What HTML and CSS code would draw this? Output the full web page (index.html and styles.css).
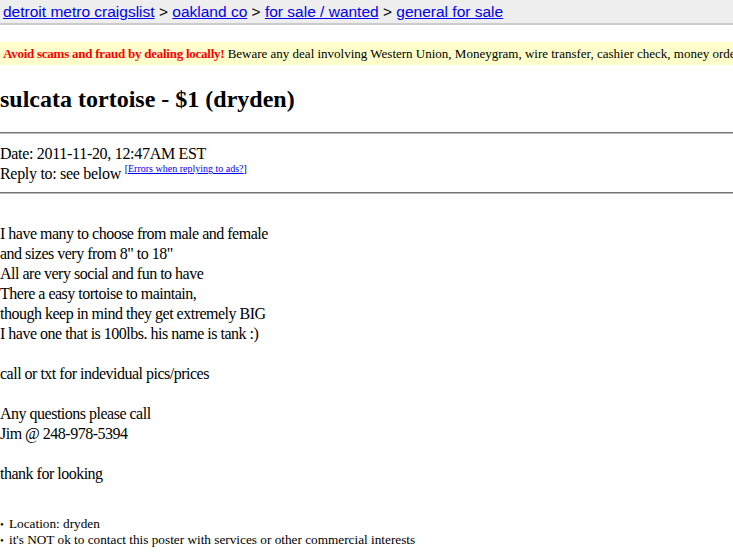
FILE: index.html
```
<!DOCTYPE html>
<html>
<head>
<meta charset="utf-8">
<title>sulcata tortoise - $1 (dryden)</title>
<link rel="stylesheet" href="styles.css">
</head>
<body>
<div class="bchead">
  <a href="#">detroit metro craigslist</a> &gt; <a href="#">oakland co</a> &gt; <a href="#">for sale / wanted</a> &gt; <a href="#">general for sale</a>
</div>

<div class="warning"><span class="warn-lead">Avoid scams and fraud by dealing locally!</span> Beware any deal involving Western Union, Moneygram, wire transfer, cashier check, money order</div>

<h2 class="posting-title">sulcata tortoise - $1 (dryden)</h2>
<hr class="rule">
<div class="meta">
  <div>Date: 2011-11-20, 12:47AM EST</div>
  <div>Reply to: see below <sup class="errors">[<a href="#">Errors when replying to ads?</a>]</sup></div>
</div>
<hr class="rule">

<div class="userbody">
I have many to choose from male and female<br>
and sizes very from 8" to 18"<br>
All are very social and fun to have<br>
There a easy tortoise to maintain,<br>
though keep in mind they get extremely BIG<br>
I have one that is 100lbs. his name is tank :)<br>
<br>
call or txt for indevidual pics/prices<br>
<br>
Any questions please call<br>
Jim @ 248-978-5394<br>
<br>
thank for looking
</div>

<ul class="blurbs">
  <li>Location: dryden</li>
  <li>it's NOT ok to contact this poster with services or other commercial interests</li>
</ul>
</body>
</html>
```

FILE: styles.css
```
html, body {
  margin: 0;
  padding: 0;
  background: #fff;
}

body {
  font-family: "Liberation Serif", "Times New Roman", serif;
  font-size: 16px;
  color: #000;
  overflow: hidden;
}

a {
  color: #0000ee;
}

/* breadcrumb bar */
.bchead {
  font-family: "Liberation Sans", Arial, sans-serif;
  font-size: 15.5px;
  line-height: 23px;
  height: 23px;
  padding-left: 3px;
  background: #eeeeee;
  border-bottom: 2px solid #cccccc;
  white-space: nowrap;
}

/* scam warning strip */
.warning {
  margin-top: 17px;
  height: 23px;
  line-height: 23px;
  padding-left: 3px;
  background: #ffffcc;
  font-size: 13px;
  white-space: nowrap;
  overflow: hidden;
}

.warn-lead {
  color: #ff0000;
  font-weight: bold;
  letter-spacing: -0.25px;
}

.posting-title {
  margin: 20px 0 0;
  font-size: 24px;
  line-height: 28px;
  font-weight: bold;
}

.rule {
  margin: 0;
  border: 0;
  border-top: 1px solid #777;
  border-bottom: 1px solid #bbb;
  height: 0;
}

.posting-title + .rule {
  margin-top: 19px;
}

.meta {
  padding: 10px 0 8px;
  line-height: 20px;
  letter-spacing: -0.3px;
}

.errors {
  font-size: 10px;
  line-height: 0;
  vertical-align: 7px;
  letter-spacing: 0;
}

.userbody {
  margin-top: 30px;
  line-height: 20px;
  letter-spacing: -0.5px;
}

.blurbs {
  margin: 32px 0 0;
  padding-left: 9px;
  font-size: 13.25px;
  line-height: 16px;
}

.blurbs li {
  list-style: none;
}

.blurbs li::before {
  content: "\2022";
  display: inline-block;
  width: 9px;
  margin-left: -9px;
  font-size: 11px;
}
```
